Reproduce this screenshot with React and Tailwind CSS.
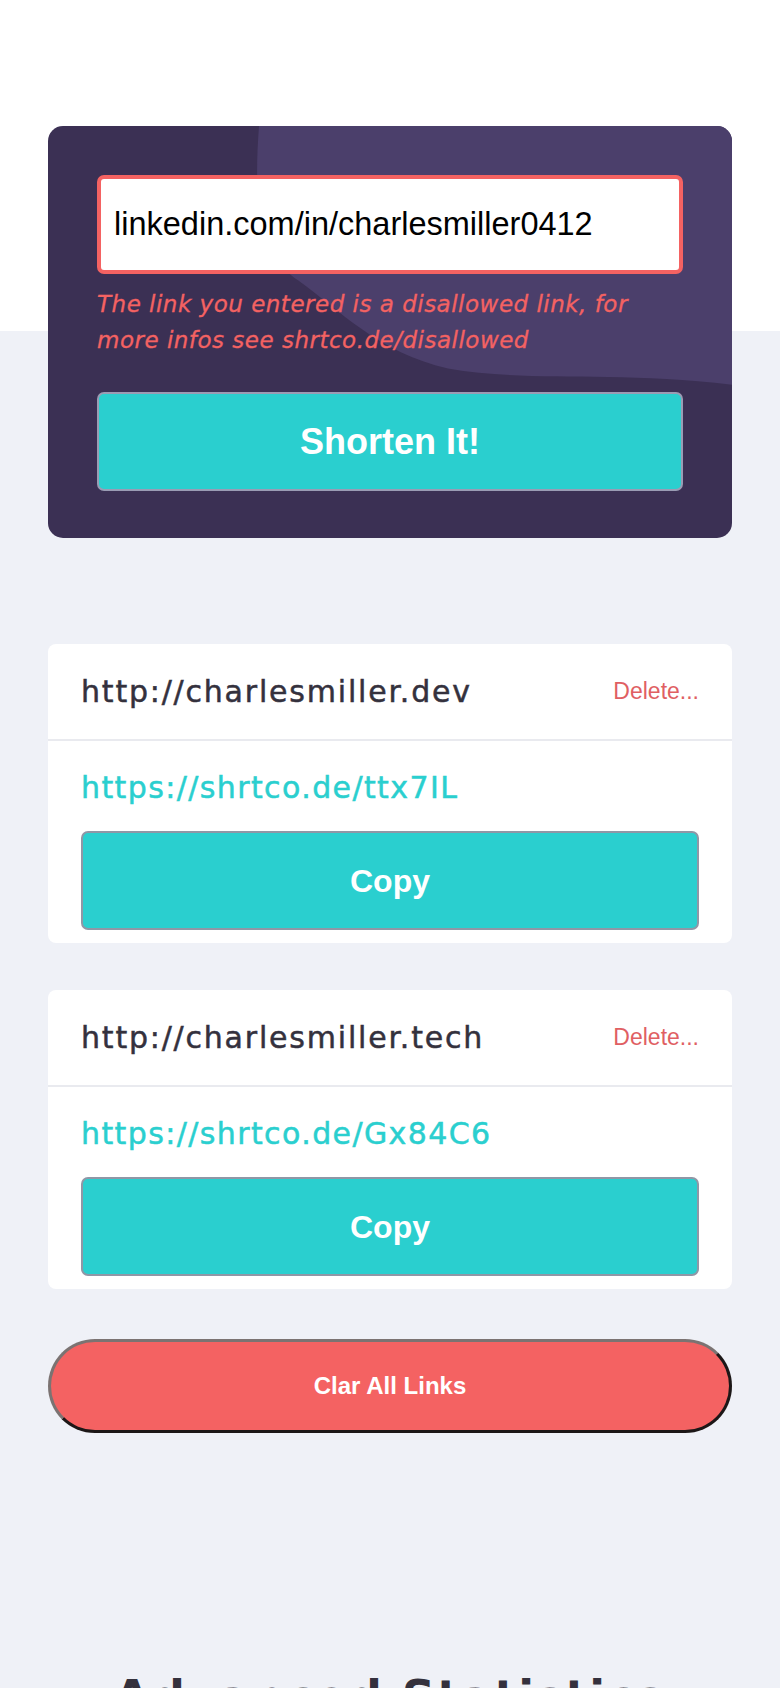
import { useState } from 'react';

const links = [
  { original: 'http://charlesmiller.dev', short: 'https://shrtco.de/ttx7IL' },
  { original: 'http://charlesmiller.tech', short: 'https://shrtco.de/Gx84C6' },
];

function LinkCard({ link }) {
  return (
    <div className="rounded-[8px] bg-white">
      <div className="flex h-[97px] items-center justify-between border-b-2 border-[#e9eaef] px-[33px]">
        <span className="font-['DejaVu_Sans',sans-serif] text-[30px] tracking-[1.8px] text-[#34313d] [-webkit-text-stroke:0.5px_#34313d]">
          {link.original}
        </span>
        <button className="font-['Liberation_Sans',Arial,sans-serif] text-[23px] text-[#e05f63]">
          Delete...
        </button>
      </div>
      <div className="px-[33px] pt-[27px] pb-[13px]">
        <p className="font-['DejaVu_Sans',sans-serif] text-[30px] leading-[40px] tracking-[1.4px] text-[#2acfcf] [-webkit-text-stroke:0.5px_#2acfcf]">
          {link.short}
        </p>
        <button className="mt-[23px] h-[99px] w-full rounded-[7px] border-2 border-[#8f97a6] bg-[#2acfcf] font-['Liberation_Sans',Arial,sans-serif] text-[32px] font-bold text-white">
          Copy
        </button>
      </div>
    </div>
  );
}

function App() {
  const [url, setUrl] = useState('linkedin.com/in/charlesmiller0412');

  return (
    <main className="min-h-screen bg-[linear-gradient(to_bottom,#ffffff_331px,#eff1f7_331px)] px-12 pt-[126px] pb-10">
      <section className="relative overflow-hidden rounded-[15px] bg-[#3b3054] px-[49px] pt-[49px] pb-[47px]">
        <svg
          className="absolute inset-0 h-full w-full"
          viewBox="0 0 684 411"
          preserveAspectRatio="none"
        >
          <path
            d="M211 0 C205 80 212 128 250 154 C292 184 330 226 400 242 C480 256 560 244 684 258 L684 0 Z"
            fill="#4b3f6b"
          />
        </svg>
        <div className="relative">
          <input
            value={url}
            onChange={(e) => setUrl(e.target.value)}
            className="h-[99px] w-full rounded-[7px] border-4 border-[#f46262] bg-white px-[13px] font-['Liberation_Sans',Arial,sans-serif] text-[32.5px] text-black outline-none"
          />
          <p className="mt-[12px] font-['DejaVu_Sans',sans-serif] text-[23px] leading-[36px] tracking-[0.5px] italic text-[#f46262] [-webkit-text-stroke:0.3px_#f46262]">
            The link you entered is a disallowed link, for
            <br />
            more infos see shrtco.de/disallowed
          </p>
          <button className="mt-[34px] h-[99px] w-full rounded-[7px] border-2 border-[#9a9cb4] bg-[#2acfcf] font-['Liberation_Sans',Arial,sans-serif] text-[36px] font-bold text-white">
            Shorten It!
          </button>
        </div>
      </section>

      <div className="mt-[106px] flex flex-col gap-[47px]">
        {links.map((link, index) => (
          <LinkCard key={index} link={link} />
        ))}
      </div>

      <button className="mt-[50px] h-[94px] w-full rounded-full border-[3px] border-t-[#7b7372] border-l-[#7b7372] border-r-[#1c1717] border-b-[#1c1717] bg-[#f46262] font-['Liberation_Sans',Arial,sans-serif] text-[24px] font-bold text-white">
        Clar All Links
      </button>

      <h2 className="mt-[230px] text-center font-['DejaVu_Sans',sans-serif] text-[46px] font-bold tracking-[2px] text-[#34313d]">
        Advanced Statistics
      </h2>
    </main>
  );
}

export default App;
